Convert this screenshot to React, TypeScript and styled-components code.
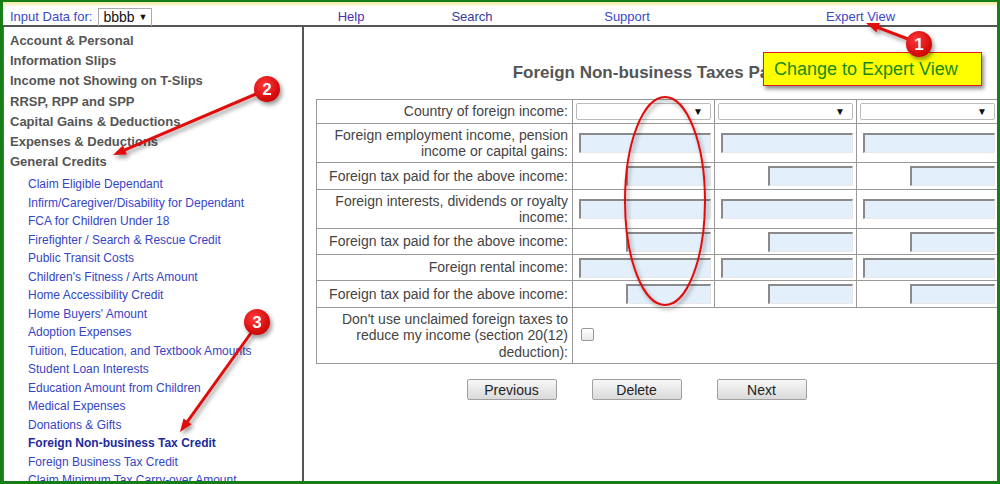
import React from 'react'
import styled, { createGlobalStyle } from 'styled-components'

const GlobalStyle = createGlobalStyle`
  body {
    margin: 0;
    font-family: "Liberation Sans", Arial, sans-serif;
    background: #fff;
  }
`

const Frame = styled.div`
    position: relative;
    width: 1000px;
    height: 484px;
    box-sizing: border-box;
    border: 3px solid #177e17;
    border-top-width: 2px;
    background: #fff;
    overflow: hidden;
    display: flex;
    flex-direction: column;
`
const Glow = styled.div`
    height: 4px;
    background: linear-gradient(#f1eba4, #fbf9e2);
`
const TopBar = styled.div`
    display: grid;
    grid-template-columns: 302px 92px 150px 160px 1fr;
    align-items: center;
    height: 21px;
    padding-top: 1px;
    box-sizing: border-box;
    border-bottom: 2px solid #555;
    font-size: 13px;
`
const DataFor = styled.div`
    display: flex;
    align-items: center;
    padding-left: 7px;
    color: #3a48c8;
    height: 18px;
`
const PickBox = styled.span`
    margin-left: 6px;
    margin-top: 1px;
    height: 17px;
    line-height: 17px;
    padding: 0 4px;
    border: 1px solid #aaa;
    border-bottom: none;
    color: #111;
    font-size: 14px;
`
const Caret = styled.span`
    font-size: 9px;
    vertical-align: 2px;
`
const NavLink = styled.a<{ $indent?: number; $color?: string }>`
    text-align: ${p => (p.$indent ? 'left' : 'center')};
    padding-left: ${p => p.$indent || 0}px;
    color: ${p => p.$color || '#3a48c8'};
    text-decoration: none;
`
const Body = styled.div`
    display: flex;
    flex: 1;
    min-height: 0;
`
const Sidebar = styled.div`
    width: 292px;
    border-left: 1px solid #666;
    border-right: 2px solid #555;
    padding: 4px 0 0 6px;
    box-sizing: content-box;
`
const Heading = styled.div`
    font-size: 13px;
    font-weight: bold;
    color: #555;
    line-height: 20.2px;
`
const LinkList = styled.div`
    margin-top: 3px;
    padding-left: 18px;
`
const SideLink = styled.div<{ $active?: boolean }>`
    font-size: 12px;
    line-height: 18.5px;
    white-space: nowrap;
    color: ${p => (p.$active ? '#1c2a9c' : '#3545c6')};
    font-weight: ${p => (p.$active ? 'bold' : 'normal')};
`
const Main = styled.div`
    flex: 1;
    padding: 36px 0 0 12px;
    overflow: hidden;
`
const Title = styled.div`
    font-size: 17px;
    font-weight: bold;
    color: #555;
    line-height: 19px;
    text-align: center;
    white-space: nowrap;
    padding-right: 16px;
`
const Form = styled.table`
    margin-top: 17px;
    border-collapse: collapse;
    table-layout: fixed;
    width: 682px;
    font-size: 14px;
    color: #444;
    & td {
        border: 1px solid #999;
    }
`
const Row = styled.tr<{ $h: number }>`
    height: ${p => p.$h}px;
`
const Label = styled.td`
    text-align: right;
    padding: 0 4px;
    line-height: 16.5px;
`
const Cell = styled.td`
    padding: 0 3px 0 5px;
    text-align: right;
    vertical-align: middle;
    line-height: 0;
`
const Amount = styled.input<{ $narrow?: boolean }>`
    box-sizing: border-box;
    width: ${p => (p.$narrow ? 85 : 132)}px;
    height: 20px;
    margin: 0;
    background: #e3f0fc;
    border: 1px solid #e8e8e8;
    border-top: 2px solid #8a8a8a;
    border-left: 2px solid #8a8a8a;
`
const Country = styled.div`
    display: flex;
    justify-content: flex-end;
    align-items: center;
    box-sizing: border-box;
    height: 17px;
    margin-left: -2px;
    padding-right: 7px;
    border: 1px solid #bbb;
    border-radius: 2px;
    background: #fff;
    font-size: 10px;
    line-height: 17px;
    color: #111;
`
const Check = styled.span`
    display: inline-block;
    width: 11px;
    height: 11px;
    margin-left: 7px;
    border: 1px solid #999;
    border-radius: 2px;
    background: linear-gradient(#fff, #e8e8e8);
`
const Buttons = styled.div`
    display: flex;
    justify-content: center;
    gap: 35px;
    margin-top: 15px;
    padding-right: 40px;
`
const Btn = styled.button`
    width: 90px;
    height: 21px;
    padding: 0;
    font-family: "Liberation Sans", Arial, sans-serif;
    font-size: 14px;
    color: #222;
    border: 1px solid #a0a0a0;
    border-radius: 2px;
    background: linear-gradient(#f7f7f7, #dadada);
`
const Callout = styled.div`
    position: absolute;
    left: 760px;
    top: 50px;
    width: 219px;
    height: 34px;
    box-sizing: border-box;
    background: #ffff00;
    border: 1px solid #e21b1b;
    box-shadow: 2px 3px 4px rgba(0, 0, 0, 0.45);
    color: #178a17;
    font-size: 18px;
    line-height: 32px;
    padding-left: 10px;
`
const Overlay = styled.svg`
    position: absolute;
    left: -3px;
    top: -2px;
    pointer-events: none;
`

const headings = [
    'Account & Personal',
    'Information Slips',
    'Income not Showing on T-Slips',
    'RRSP, RPP and SPP',
    'Capital Gains & Deductions',
    'Expenses & Deductions',
    'General Credits',
]

const credits = [
    'Claim Eligible Dependant',
    'Infirm/Caregiver/Disability for Dependant',
    'FCA for Children Under 18',
    'Firefighter / Search & Rescue Credit',
    'Public Transit Costs',
    "Children's Fitness / Arts Amount",
    'Home Accessibility Credit',
    "Home Buyers' Amount",
    'Adoption Expenses',
    'Tuition, Education, and Textbook Amounts',
    'Student Loan Interests',
    'Education Amount from Children',
    'Medical Expenses',
    'Donations & Gifts',
    'Foreign Non-business Tax Credit',
    'Foreign Business Tax Credit',
    'Claim Minimum Tax Carry-over Amount',
]

type FieldRow = { label: React.ReactNode; h: number; narrow?: boolean }

const rows: FieldRow[] = [
    { label: <>Foreign employment income, pension<br />income or capital gains:</>, h: 39 },
    { label: 'Foreign tax paid for the above income:', h: 27, narrow: true },
    { label: <>Foreign interests, dividends or royalty<br />income:</>, h: 39 },
    { label: 'Foreign tax paid for the above income:', h: 26, narrow: true },
    { label: 'Foreign rental income:', h: 26 },
    { label: 'Foreign tax paid for the above income:', h: 27, narrow: true },
]

function Arrow({ x1, y1, x2, y2 }: { x1: number; y1: number; x2: number; y2: number }) {
    const a = Math.atan2(y2 - y1, x2 - x1)
    const len = 13
    const w = 5
    const bx = x2 - Math.cos(a) * len
    const by = y2 - Math.sin(a) * len
    const px = -Math.sin(a) * w
    const py = Math.cos(a) * w
    return (
        <g filter="url(#shadow)">
            <line x1={x1} y1={y1} x2={bx} y2={by} stroke="#e01010" strokeWidth={3} strokeLinecap="round" />
            <polygon points={`${x2},${y2} ${bx + px},${by + py} ${bx - px},${by - py}`} fill="#e01010" />
        </g>
    )
}

function Badge({ x, y, n }: { x: number; y: number; n: number }) {
    return (
        <g filter="url(#shadow)">
            <circle cx={x} cy={y} r={13} fill="url(#badge)" />
            <text x={x} y={y + 6} textAnchor="middle" fill="#fff" fontSize={17} fontWeight="bold"
                fontFamily='"Liberation Sans", Arial, sans-serif'>{n}</text>
        </g>
    )
}

export default function App() {
    return (
        <>
            <GlobalStyle />
            <Frame>
                <Glow />
                <TopBar>
                    <DataFor>Input Data for: <PickBox>bbbb <Caret>▼</Caret></PickBox></DataFor>
                    <NavLink $color="#4b2fb8">Help</NavLink>
                    <NavLink $color="#333a9e">Search</NavLink>
                    <NavLink>Support</NavLink>
                    <NavLink $indent={119}>Expert View</NavLink>
                </TopBar>
                <Body>
                    <Sidebar>
                        {headings.map(h => <Heading key={h}>{h}</Heading>)}
                        <LinkList>
                            {credits.map(c => (
                                <SideLink key={c} $active={c === 'Foreign Non-business Tax Credit'}>{c}</SideLink>
                            ))}
                        </LinkList>
                    </Sidebar>
                    <Main>
                        <Title>Foreign Non-business Taxes Paid</Title>
                        <Form>
                            <colgroup>
                                <col style={{ width: 256 }} />
                                <col style={{ width: 142 }} />
                                <col style={{ width: 142 }} />
                                <col style={{ width: 142 }} />
                            </colgroup>
                            <tbody>
                                <Row $h={24}>
                                    <Label>Country of foreign income:</Label>
                                    {[0, 1, 2].map(i => (
                                        <Cell key={i}><Country>▼</Country></Cell>
                                    ))}
                                </Row>
                                {rows.map((r, i) => (
                                    <Row key={i} $h={r.h}>
                                        <Label>{r.label}</Label>
                                        {[0, 1, 2].map(j => (
                                            <Cell key={j}><Amount $narrow={r.narrow} /></Cell>
                                        ))}
                                    </Row>
                                ))}
                                <Row $h={56}>
                                    <Label>Don't use unclaimed foreign taxes to<br />reduce my income (section 20(12)<br />deduction):</Label>
                                    <td colSpan={3} style={{ borderRight: 'none' }}><Check /></td>
                                </Row>
                            </tbody>
                        </Form>
                        <Buttons>
                            <Btn>Previous</Btn>
                            <Btn>Delete</Btn>
                            <Btn>Next</Btn>
                        </Buttons>
                    </Main>
                </Body>
                <Callout>Change to Expert View</Callout>
                <Overlay width={1000} height={484} viewBox="0 0 1000 484">
                    <defs>
                        <filter id="shadow" x="-50%" y="-50%" width="200%" height="200%">
                            <feDropShadow dx="2" dy="3" stdDeviation="2" floodColor="#000" floodOpacity="0.4" />
                        </filter>
                        <radialGradient id="badge" cx="40%" cy="35%" r="70%">
                            <stop offset="0%" stopColor="#ff3a3a" />
                            <stop offset="100%" stopColor="#c80000" />
                        </radialGradient>
                    </defs>
                    <ellipse cx={665} cy={201} rx={40} ry={104} fill="none" stroke="#e01010" strokeWidth={2}
                        filter="url(#shadow)" />
                    <Arrow x1={908} y1={39} x2={866} y2={23} />
                    <Arrow x1={256} y1={94} x2={113} y2={155} />
                    <Arrow x1={251} y1={333} x2={180} y2={432} />
                    <Badge x={919} y={44} n={1} />
                    <Badge x={267} y={89} n={2} />
                    <Badge x={257} y={322} n={3} />
                </Overlay>
            </Frame>
        </>
    )
}
